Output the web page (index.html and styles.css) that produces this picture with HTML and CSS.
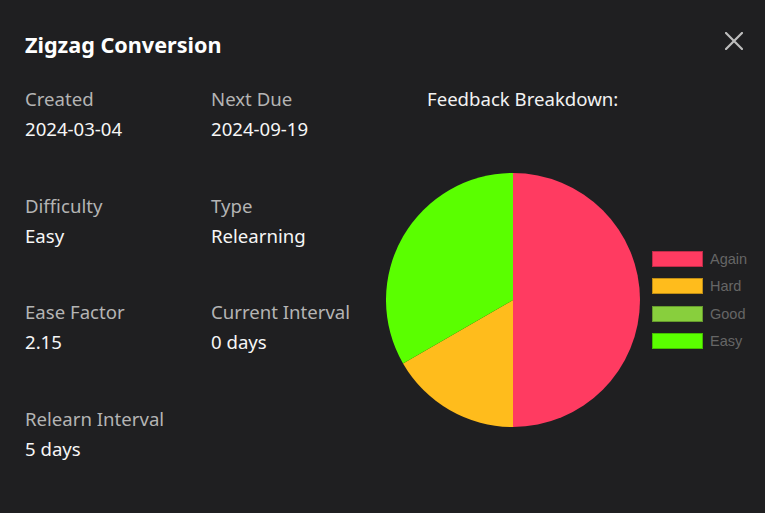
FILE: index.html
```html
<!DOCTYPE html>
<html lang="en">
<head>
<meta charset="utf-8">
<title>Zigzag Conversion</title>
<link rel="stylesheet" href="styles.css">
</head>
<body>
<div class="modal">
  <div class="header">
    <h2 class="title">Zigzag Conversion</h2>
    <button class="close" aria-label="Close">
      <svg width="18" height="18" viewBox="0 0 18 18"><path d="M1 1L17 17M17 1L1 17" stroke="#bdbdbd" stroke-width="2.2" stroke-linecap="square" fill="none"/></svg>
    </button>
  </div>
  <div class="body">
    <div class="fields">
      <div class="field"><div class="label">Created</div><div class="value">2024-03-04</div></div>
      <div class="field"><div class="label">Next Due</div><div class="value">2024-09-19</div></div>
      <div class="field"><div class="label">Difficulty</div><div class="value">Easy</div></div>
      <div class="field"><div class="label">Type</div><div class="value">Relearning</div></div>
      <div class="field"><div class="label">Ease Factor</div><div class="value">2.15</div></div>
      <div class="field"><div class="label">Current Interval</div><div class="value">0 days</div></div>
      <div class="field"><div class="label">Relearn Interval</div><div class="value">5 days</div></div>
    </div>
    <div class="chart">
      <div class="chart-title">Feedback Breakdown:</div>
      <div class="chart-row">
        <svg class="pie" width="254" height="254" viewBox="0 0 254 254">
          <path d="M127 127L127 0A127 127 0 0 1 127 254Z" fill="#ff3b61"/>
          <path d="M127 127L127 254A127 127 0 0 1 17.01 190.5Z" fill="#ffbc1c"/>
          <path d="M127 127L17.01 190.5A127 127 0 0 1 127 0Z" fill="#5aff00"/>
        </svg>
        <ul class="legend">
          <li class="legend-item"><span class="swatch again"></span>Again</li>
          <li class="legend-item"><span class="swatch hard"></span>Hard</li>
          <li class="legend-item"><span class="swatch good"></span>Good</li>
          <li class="legend-item"><span class="swatch easy"></span>Easy</li>
        </ul>
      </div>
    </div>
  </div>
</div>
</body>
</html>
```
FILE: styles.css
```css
html, body {
  margin: 0;
  padding: 0;
  background: #1f1f21;
  height: 100%;
}
body {
  font-family: "Noto Sans", "Open Sans", sans-serif;
  color: #f2f2f2;
}
.modal {
  padding: 30px 22px 20px 25px;
}
.header {
  display: flex;
  justify-content: space-between;
  align-items: center;
  height: 30px;
}
.title {
  margin: 0;
  font-size: 21.6px;
  font-weight: 700;
  line-height: 30px;
  color: #ffffff;
}
.close {
  background: none;
  border: 0;
  padding: 0;
  width: 18px;
  height: 18px;
  display: flex;
  margin-top: -8px;
  cursor: pointer;
}
.body {
  display: flex;
  margin-top: 24px;
}
.fields {
  display: grid;
  grid-template-columns: 186px 175px;
  row-gap: 46.5px;
  align-content: start;
}
.label {
  font-size: 18.6px;
  line-height: 30px;
  color: #b4b4b4;
  white-space: nowrap;
}
.value {
  font-size: 18.6px;
  line-height: 30px;
  color: #f6f6f6;
}
.chart {
  display: flex;
  flex-direction: column;
}
.chart-title {
  font-size: 18.6px;
  line-height: 30px;
  color: #f2f2f2;
  margin-left: 41px;
  white-space: nowrap;
}
.chart-row {
  display: flex;
  align-items: center;
  margin-top: 59px;
}
.pie {
  display: block;
}
.legend {
  list-style: none;
  margin: 0 0 0 12px;
  padding: 0;
  display: flex;
  flex-direction: column;
  gap: 11.3px;
}
.legend-item {
  display: flex;
  align-items: center;
  height: 16px;
  font-family: "Liberation Sans", Arial, sans-serif;
  font-size: 14.5px;
  color: #666666;
}
.swatch {
  width: 51px;
  height: 16px;
  box-sizing: border-box;
  border: 1px solid rgba(0, 0, 0, 0.25);
  margin-right: 7px;
}
.again { background: #ff3b61; }
.hard { background: #ffbc1c; }
.good { background: #88cf3d; }
.easy { background: #5aff00; }
```
